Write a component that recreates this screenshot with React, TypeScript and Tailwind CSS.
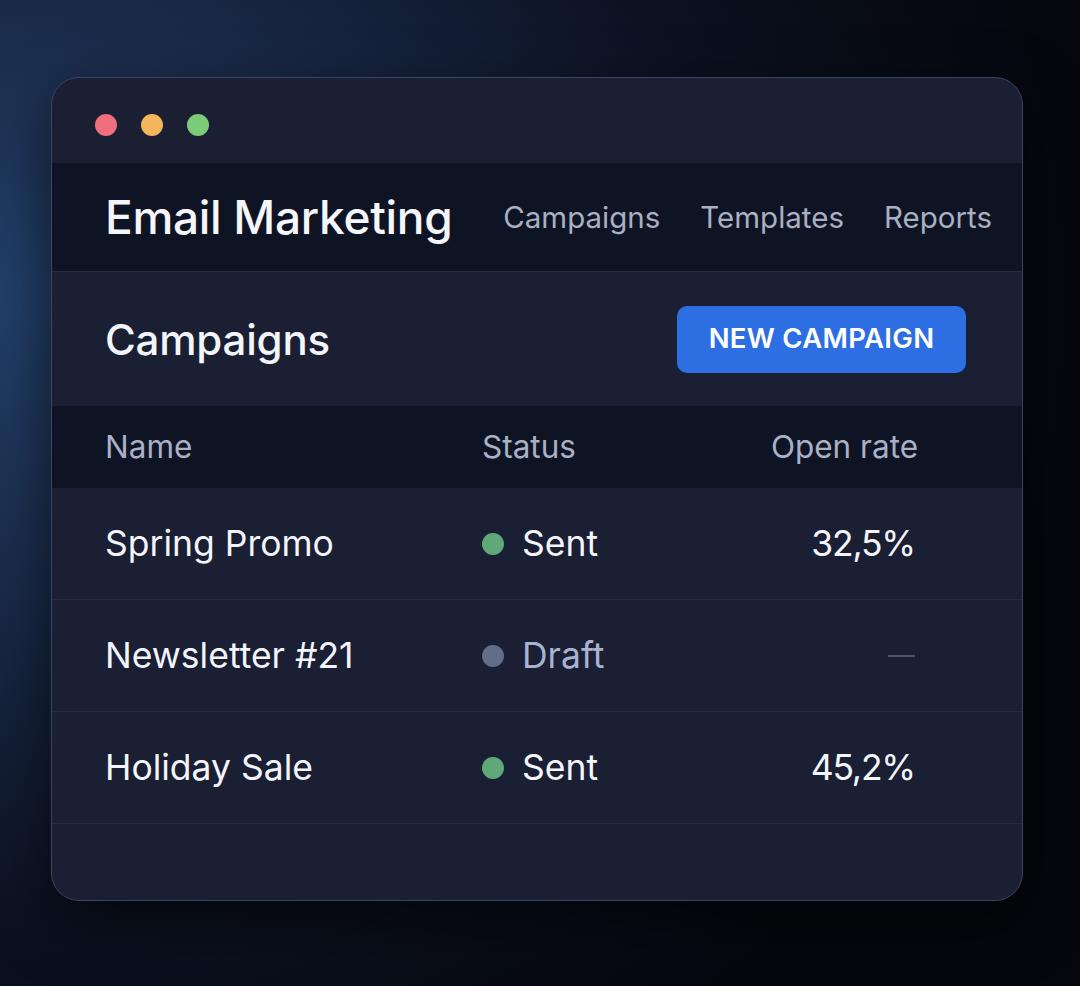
import React from 'react';

type Row = { name: string; status: 'Sent' | 'Draft'; rate: string };

const rows: Row[] = [
  { name: 'Spring Promo', status: 'Sent', rate: '32,5%' },
  { name: 'Newsletter #21', status: 'Draft', rate: '' },
  { name: 'Holiday Sale', status: 'Sent', rate: '45,2%' },
];

const font = { fontFamily: 'Inter, "Noto Sans", sans-serif' };

const StatusCell: React.FC<{ status: Row['status'] }> = ({ status }) => {
  const sent = status === 'Sent';
  return (
    <div className="flex items-center gap-[18px]">
      <span className={`w-[22px] h-[22px] rounded-full ${sent ? 'bg-[#5fa877]' : 'bg-[#646d88]'}`} />
      <span className={sent ? 'text-[#f3f5fa]' : 'text-[#aab2d2]'}>{status}</span>
    </div>
  );
};

export default function App() {
  return (
    <div
      className="w-full h-[986px] overflow-hidden pt-[77px] pl-[51px] bg-[radial-gradient(ellipse_100%_95%_at_0%_30%,#22406a_0%,#1a2a48_32%,#0c1222_66%,#05070d_100%)]"
      style={font}
    >
      <div className="w-[972px] h-[824px] rounded-[28px] border border-[#3a4562] bg-[#1a1f33] overflow-hidden flex flex-col shadow-[0_20px_60px_rgba(0,0,0,0.6)]">
        {/* title bar */}
        <div className="h-[85px] shrink-0 flex items-center gap-[24px] pl-[43px] pt-[8px]">
          <span className="w-[22px] h-[22px] rounded-full bg-[#f06f7f]" />
          <span className="w-[22px] h-[22px] rounded-full bg-[#f4b45b]" />
          <span className="w-[22px] h-[22px] rounded-full bg-[#7ccb76]" />
        </div>

        {/* app header */}
        <div className="h-[109px] shrink-0 flex items-center justify-between pl-[53px] pr-[30px] bg-[#0f1424] border-b border-[#262d43]">
          <div className="text-[46px] font-medium text-[#f5f6fa] tracking-[-0.3px]">Email Marketing</div>
          <nav className="flex items-center gap-[40px] text-[29.5px] text-[#a9b0c3]">
            <span>Campaigns</span>
            <span>Templates</span>
            <span>Reports</span>
          </nav>
        </div>

        {/* section title */}
        <div className="h-[134px] shrink-0 flex items-center justify-between pl-[53px] pr-[56px]">
          <div className="text-[42px] font-medium text-[#f3f5fa] tracking-[-0.2px]">Campaigns</div>
          <button className="w-[289px] h-[67px] rounded-[10px] bg-[#2d6ee3] text-white text-[27.5px] font-semibold tracking-[0.3px]">
            NEW CAMPAIGN
          </button>
        </div>

        {/* table head */}
        <div className="h-[82px] shrink-0 grid grid-cols-[377px_1fr_auto] items-center pl-[53px] pr-[104px] bg-[#0f1424] text-[31.5px] text-[#a9b1c6]">
          <span>Name</span>
          <span>Status</span>
          <span>Open rate</span>
        </div>

        {/* rows */}
        {rows.map((r) => (
          <div
            key={r.name}
            className="h-[112px] shrink-0 grid grid-cols-[377px_1fr_auto] items-center pl-[53px] pr-[107px] border-b border-[#242a40] text-[35.5px] text-[#f3f5fa]"
          >
            <span>{r.name}</span>
            <StatusCell status={r.status} />
            {r.rate ? (
              <span className="text-right tracking-[-1.2px]">{r.rate}</span>
            ) : (
              <span className="w-[27px] h-[2px] bg-[#4a5270] justify-self-end" />
            )}
          </div>
        ))}
      </div>
    </div>
  );
}
